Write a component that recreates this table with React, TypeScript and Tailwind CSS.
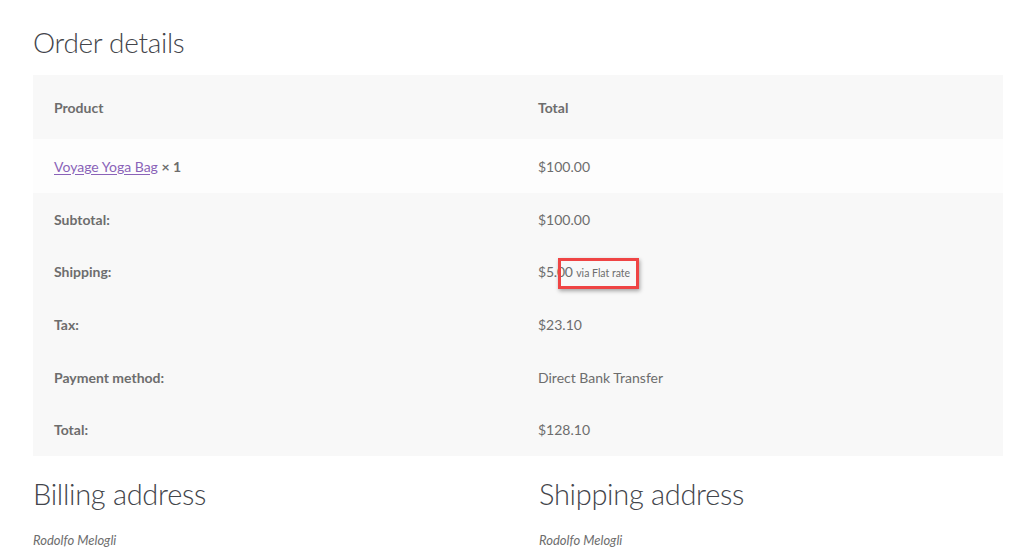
import React from "react";

const rows = [
  { label: "Subtotal:", value: "$100.00" },
  { label: "Shipping:", value: "shipping" },
  { label: "Tax:", value: "$23.10" },
  { label: "Payment method:", value: "Direct Bank Transfer" },
  { label: "Total:", value: "$128.10" },
];

export default function App() {
  return (
    <div
      className="w-[1024px] h-[552px] overflow-hidden bg-white text-[#6d6d6d] px-[33px]"
      style={{ fontFamily: "Lato, 'Open Sans', sans-serif" }}
    >
      <h2 className="pt-[25px] h-[75px] text-[28px] leading-[34px] font-light text-[#43454b] tracking-[-0.3px]">
        Order details
      </h2>
      <div className="w-[970px] bg-[#f8f8f8] text-[14px]">
        <div className="grid grid-cols-2 h-[64px] items-center font-bold">
          <div className="pl-[21px]">Product</div>
          <div className="pl-[20px]">Total</div>
        </div>
        <div className="grid grid-cols-2 h-[54px] items-center bg-[#fdfdfd]">
          <div className="pl-[21px]">
            <a className="text-[#8a63b8] underline underline-offset-2">Voyage Yoga Bag</a>{" "}
            <strong className="font-bold">× 1</strong>
          </div>
          <div className="pl-[20px]">$100.00</div>
        </div>
        {rows.map((r) => (
          <div key={r.label} className="grid grid-cols-2 h-[52.6px] items-center">
            <div className="pl-[21px] font-bold">{r.label}</div>
            <div className="pl-[20px]">
              {r.value === "shipping" ? (
                <span className="relative inline-block tracking-[-0.2px]">
                  $5.00{" "}
                  <small className="text-[10.5px] tracking-normal">via Flat rate</small>
                  <span className="absolute left-[20px] top-[-3px] w-[81px] h-[31px] border-[3px] border-[#ef4444] shadow-[1px_2px_4px_rgba(0,0,0,0.35)]" />
                </span>
              ) : (
                r.value
              )}
            </div>
          </div>
        ))}
      </div>
      <div className="grid grid-cols-2 w-[970px] pt-[18px]">
        <div>
          <h3 className="text-[29px] leading-[40px] font-light text-[#43454b] tracking-[-0.3px]">Billing address</h3>
          <p className="mt-[17px] italic text-[13px]">Rodolfo Melogli</p>
        </div>
        <div className="pl-[21px]">
          <h3 className="text-[29px] leading-[40px] font-light text-[#43454b] tracking-[-0.3px]">Shipping address</h3>
          <p className="mt-[17px] italic text-[13px]">Rodolfo Melogli</p>
        </div>
      </div>
    </div>
  );
}
